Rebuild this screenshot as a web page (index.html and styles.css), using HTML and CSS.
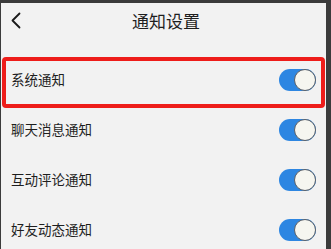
FILE: index.html
```html
<!DOCTYPE html>
<html lang="zh">
<head>
<meta charset="utf-8">
<link rel="stylesheet" href="styles.css">
</head>
<body>
<div class="app">
  <header class="header">
    <span class="back">
      <svg width="12" height="17" viewBox="0 0 12 17"><path d="M9.5 1.5 L2.5 8.5 L9.5 15.5" fill="none" stroke="#1a1a1a" stroke-width="1.8" stroke-linecap="round" stroke-linejoin="round"/></svg>
    </span>
    <h1 class="title">通知设置</h1>
  </header>
  <ul class="list">
    <li class="row"><span class="label">系统通知</span><span class="toggle"><span class="knob"></span></span></li>
    <li class="row"><span class="label">聊天消息通知</span><span class="toggle"><span class="knob"></span></span></li>
    <li class="row"><span class="label">互动评论通知</span><span class="toggle"><span class="knob"></span></span></li>
    <li class="row"><span class="label">好友动态通知</span><span class="toggle"><span class="knob"></span></span></li>
  </ul>
  <div class="highlight"></div>
</div>
</body>
</html>
```
FILE: styles.css
```css
html, body {
  margin: 0;
  padding: 0;
  background: #3b3b3b;
  height: 249px;
  overflow: hidden;
}
.app {
  position: relative;
  margin: 3px 0 0 1px;
  width: 325px;
  height: 246px;
  background: #f2f2f2;
  font-family: "Noto Sans CJK SC", "Noto Sans", sans-serif;
  color: #1e1e1e;
  overflow: hidden;
}
.header {
  height: 35px;
  display: flex;
  align-items: center;
  justify-content: center;
  position: relative;
}
.back {
  position: absolute;
  left: 9px;
  top: 9px;
  display: flex;
}
.title {
  margin: 0;
  padding-left: 5px;
  font-size: 17px;
  font-weight: normal;
  line-height: 1;
}
.list {
  list-style: none;
  margin: 17px 0 0 0;
  padding: 0;
}
.row {
  height: 50px;
  display: flex;
  align-items: center;
  justify-content: space-between;
  padding: 0 10px;
}
.label {
  font-size: 13.5px;
  line-height: 1;
}
.toggle {
  width: 37px;
  height: 22px;
  border-radius: 11px;
  background: #2d86e2;
  display: flex;
  justify-content: flex-end;
  box-sizing: border-box;
}
.knob {
  width: 22px;
  height: 22px;
  border-radius: 50%;
  background: #f6f6f0;
  border: 1.2px solid #5a5f66;
  box-sizing: border-box;
}
.highlight {
  position: absolute;
  left: 1px;
  top: 54px;
  width: 323px;
  height: 51px;
  border: 4px solid #ee1d1a;
  border-radius: 4px;
  box-sizing: border-box;
}
```
